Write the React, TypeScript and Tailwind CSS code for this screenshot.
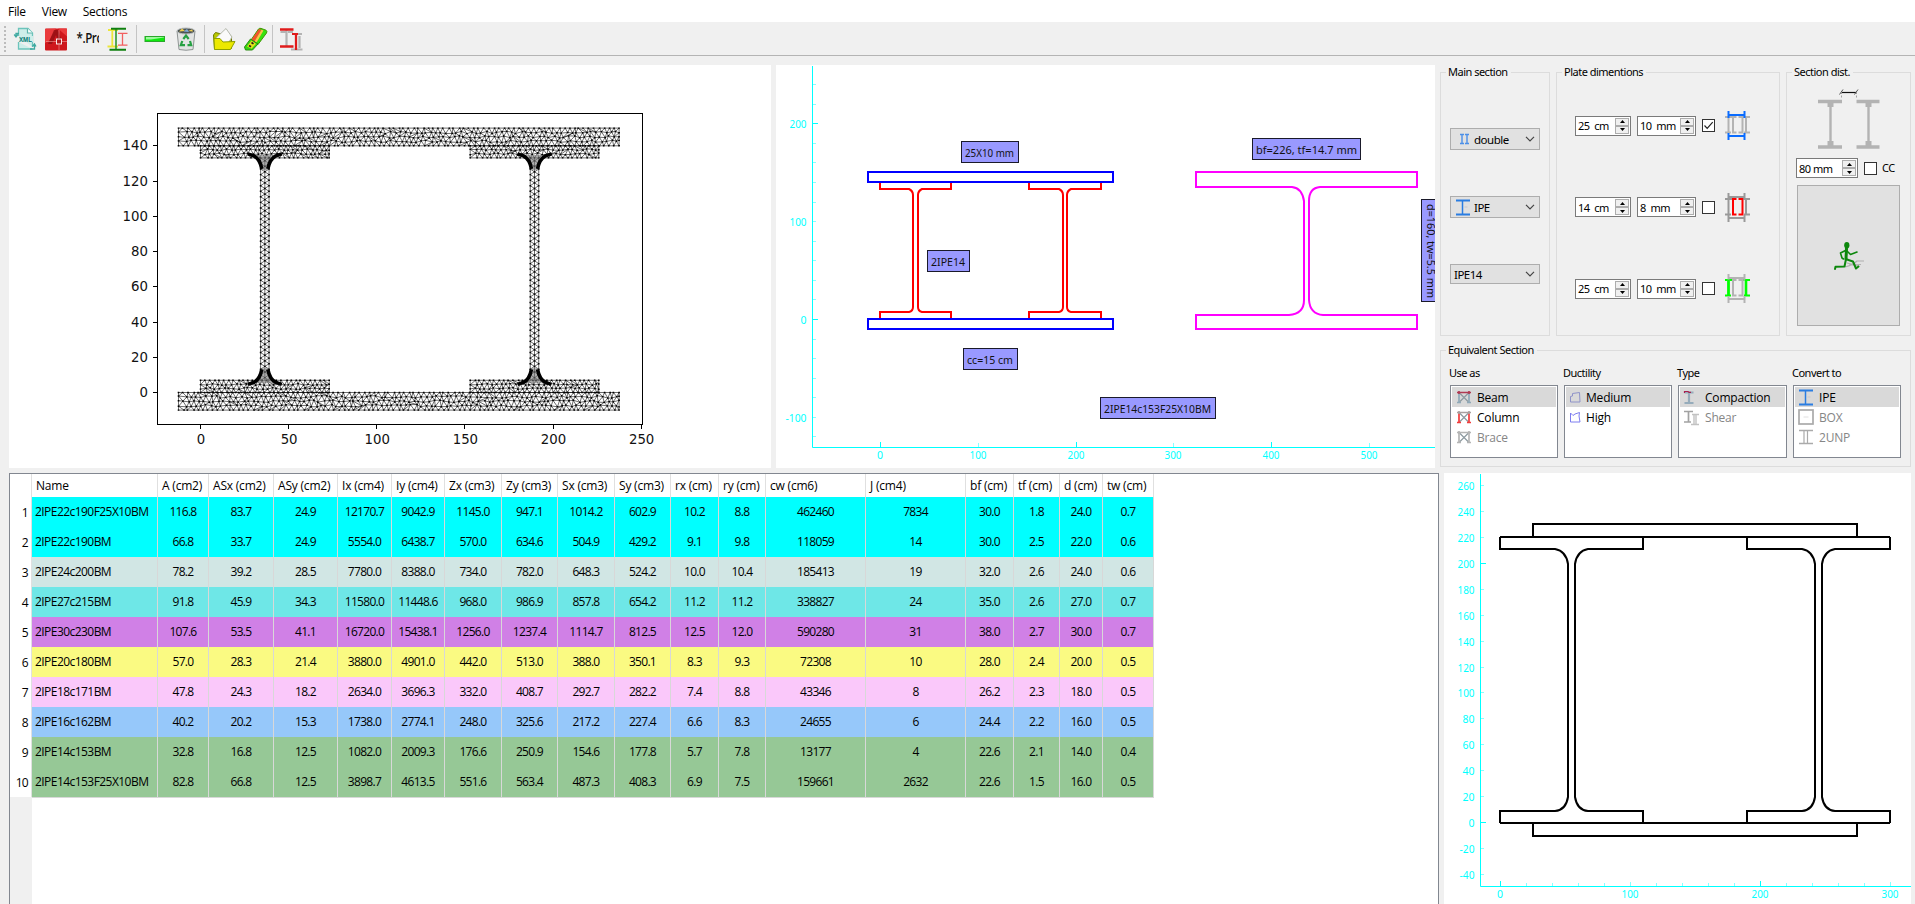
import React from "react";

const UI = "font-['Noto_Sans',sans-serif] tracking-[-0.5px]";
const SEGOE = "font-['Open_Sans','Noto_Sans',sans-serif]";
const TAHOMA = "'Noto Sans',sans-serif";

/* ---------- toolbar icons ---------- */

const XmlIcon = () => (
  <svg width="24" height="24" viewBox="0 0 24 24" className="shrink-0">
    <path d="M5.500 9V1.500H15l4.500 4.500V20M19.500 22H5.500V15" fill="#cfeeea" stroke="#6cc4bb" strokeWidth="1.300" />
    <path d="M6 9H20V15H6z" fill="#cfeeea" />
    <path d="M14.500 1.500V6H19.500" fill="#fff" stroke="#5fb5ae" strokeWidth="1.200" />
    <path d="M6 6.500H3V9.500M1.200 7.500 3 10 4.800 7.500M17 22h4.500V18M19.500 19.500 21.500 17l1.500 2.500" fill="none" stroke="#3fa9a1" strokeWidth="1.300" />
    <text x="6" y="14.500" fontFamily="Liberation Sans, sans-serif" fontSize="6.500" fontWeight="700" letterSpacing="0" fill="#087a74" textLength="13" lengthAdjust="spacingAndGlyphs">XML</text>
  </svg>
);
const CadIcon = () => (
  <svg width="24" height="24" viewBox="0 0 24 24" className="shrink-0">
    <rect x="1" y="1.500" width="22" height="22" rx="1" fill="#cf181d" />
    <path d="M1 2 12 1.500 5 14 1 16zM14 1.500h9v8z" fill="#ea3a3c" />
    <path d="M4 17 10 3h4l5 14h-4l-3-9-4 9z" fill="#8e0f13" opacity=".75" />
    <path d="M2 14.500h10M18 14.500h5M15 3v8M15 18v5" stroke="#f0a09a" strokeWidth=".6" />
    <rect x="12.500" y="12" width="5" height="5" fill="#b51c1f" stroke="#fff" strokeWidth=".9" />
  </svg>
);
const ProIcon = () => (
  <svg width="23" height="24" viewBox="0 0 23 24" className="mr-px shrink-0">
    <text x=".5" y="16" fontFamily="'Open Sans',sans-serif" fontSize="14" fontWeight="600" fill="#111" textLength="26.500" lengthAdjust="spacingAndGlyphs">*.Pro</text>
  </svg>
);
const BeamsIcon = () => (
  <svg width="24" height="24" viewBox="0 0 24 24" className="shrink-0">
    <path d="M1 3h10M.5 19.500H11M5.300 3v16" stroke="#ece63a" strokeWidth="1.800" fill="none" />
    <path d="M11 6.300h9.500M11 18.200h9.500M15.500 6.500v11.500" stroke="#f26060" strokeWidth="1.300" fill="none" />
    <path d="M9 2v21" stroke="#2d962d" strokeWidth="1.600" />
    <path d="M4 1.800h15M2.500 22.800h16.500" stroke="#0f800f" strokeWidth="2" />
  </svg>
);
const MinusIcon = () => (
  <svg width="24" height="24" viewBox="0 0 24 24" className="shrink-0">
    <rect x="2" y="9.500" width="19.500" height="5" fill="#0fe80f" stroke="#2aa82a" />
    <path d="M3 10h18v.6L8 12.500H3z" fill="#9dfa9d" />
  </svg>
);
const RecycleIcon = () => (
  <svg width="24" height="24" viewBox="0 0 24 24" className="shrink-0">
    <path d="M3 4 5 22.500q7 1.500 14 0L21 4z" fill="#e2e4e3" stroke="#8f9494" />
    <ellipse cx="12" cy="4" rx="9" ry="3" fill="#4d5456" stroke="#b9bebe" />
    <path d="M5 4.500 8 1.500l3 2.500zM14 4l4-1.500 1 2z" fill="#f0cf50" />
    <path d="M9.500 4.500 13 2l2 3z" fill="#7fa9d8" />
    <path d="m9.300 12 2.700-3.500L14.700 12M16 14l1.200 4.200H13.500M11 18.200H6.800L8.300 14" fill="none" stroke="#26a043" strokeWidth="2.200" />
  </svg>
);
const FolderIcon = () => (
  <svg width="24" height="24" viewBox="0 0 24 24" className="shrink-0">
    <path d="M2.500 22 1.500 8l2-2.500 4 1h9l3 3v12z" fill="#b9c800" stroke="#6d7c00" />
    <path d="M4 11 14 1.500l6 8.500L15 18z" fill="#fafafa" stroke="#b5b9ad" />
    <path d="M2.500 22.500 2 11.500h6l3 3.500 12-.5-4.500 8z" fill="#ece900" stroke="#8fa000" />
  </svg>
);
const UsbIcon = () => (
  <svg width="26" height="24" viewBox="0 0 26 24" className="shrink-0">
    <path d="M8 13 15.500 2q1-1 2.500-.6l5 1.800q1.500 1 .5 2.800L15 17.500z" fill="#35e30e" stroke="#3f9600" />
    <path d="M8.500 12.500 16 2l2.500.8L11.500 14.500z" fill="#f4512a" />
    <path d="M11.500 14.500 18.500 2.800 20.500 3.500 13.500 15.500z" fill="#ffc04a" />
    <path d="M1.500 20 7.500 12l7.500 5-5.500 6H2.500z" fill="#35d614" stroke="#2b8a10" />
    <path d="M4 19.500 8.500 13.500l4.500 3.200-4.500 5z" fill="#e2e31c" />
    <path d="m6 18.500 2 1.300M8.500 15.500l2 1.400" fill="none" stroke="#222" strokeWidth="1.700" />
  </svg>
);
const SectionIcon = () => (
  <svg width="24" height="24" viewBox="0 0 24 24" className="shrink-0">
    <path d="M7.500 3v16M1.500 5h5M9 5h5M13 7h10M12 22.500h11.500M17 7v15M20.500 9v12" stroke="#b3b3b3" strokeWidth="2.200" />
    <path d="M1 2.500h13.500M1 19.500h13.500" stroke="#e01b1b" strokeWidth="2.300" />
    <path d="M17 6v17M13 7h6" stroke="#e01b1b" strokeWidth="2.200" />
  </svg>
);

const Sep = ({ cls }: { cls: string }) => <div className={`h-7 w-px shrink-0 bg-[#c4c4c4] ${cls}`} />;

/* ---------- mesh plot ---------- */

let seed = 17;
const rnd = () => {
  seed = (seed * 16807) % 2147483647;
  return seed / 2147483647 - 0.5;
};

/* Staggered triangulation of an axis-aligned rectangle with jittered interior nodes. */
function meshRect(x0: number, y0: number, x1: number, y1: number, step: number, rows: number, jit: number) {
  const cols = Math.round((x1 - x0) / step);
  const w = (x1 - x0) / cols;
  const pts: number[][][] = [];
  for (let r = 0; r <= rows; r++) {
    const row: number[][] = [];
    for (let c = 0; c <= cols; c++) {
      const edgeX = c === 0 || c === cols;
      const edgeY = r === 0 || r === rows;
      row.push([
        x0 + w * c + (edgeX ? 0 : (r % 2 ? w / 2 : 0) + rnd() * jit),
        y0 + ((y1 - y0) * r) / rows + (edgeY ? 0 : rnd() * jit),
      ]);
    }
    pts.push(row);
  }
  let d = "";
  let dots = "";
  const seg = (a: number[], b: number[]) => {
    d += `M${a[0].toFixed(1)} ${a[1].toFixed(1)}L${b[0].toFixed(1)} ${b[1].toFixed(1)}`;
  };
  for (let r = 0; r <= rows; r++)
    for (let c = 0; c <= cols; c++) {
      const p = pts[r][c];
      dots += `M${(p[0] - 0.8).toFixed(1)} ${p[1].toFixed(1)}h1.6`;
      if (c < cols) seg(p, pts[r][c + 1]);
      if (r < rows) seg(p, pts[r + 1][c]);
      if (c < cols && r < rows) {
        const flip = rnd() > 0.4;
        if ((r % 2 === 1) !== flip) seg(p, pts[r + 1][c + 1]);
        else seg(pts[r][c + 1], pts[r + 1][c]);
      }
    }
  return { d, dots };
}

/* Two-column web strip: edge nodes and centre nodes alternate. */
function meshWeb(x0: number, y0: number, x1: number, y1: number, n: number) {
  const h = (y1 - y0) / n;
  const xm = (x0 + x1) / 2;
  let d = `M${x0} ${y0}V${y1}M${x1} ${y0}V${y1}M${xm} ${y0}V${y1}`;
  let dots = "";
  for (let i = 0; i < n; i++) {
    const y = y0 + i * h;
    const m = (y + h / 2).toFixed(1);
    d += `M${x0} ${y.toFixed(1)}L${xm} ${m}L${x1} ${y.toFixed(1)}M${x0} ${(y + h).toFixed(1)}L${xm} ${m}L${x1} ${(y + h).toFixed(1)}`;
    dots += `M${xm - 0.8} ${m}h1.6M${x0 - 0.8} ${y.toFixed(1)}h1.6M${x1 - 0.8} ${y.toFixed(1)}h1.6`;
  }
  return { d, dots };
}

const S = 1.7625;
const mx = (v: number) => 191.5 + v * S;
const my = (v: number) => 327.5 - v * S;
const meshParts = [
  meshRect(mx(-12.5), my(150), mx(237.5), my(140), 5, 4, 2.4),
  meshRect(mx(-12.5), my(0), mx(237.5), my(-10), 5, 4, 2.4),
  ...[0, 153].flatMap((o) => [
    meshRect(mx(o), my(140), mx(o + 73), my(133.1), 4.8, 3, 1.8),
    meshRect(mx(o), my(6.9), mx(o + 73), my(0), 4.8, 3, 1.8),
    meshWeb(mx(o + 34.1), my(133.1), mx(o + 38.9), my(6.9), 40),
  ]),
];

function MeshPlot() {
  const fillet = (cx: number, top: boolean) => {
    const y = top ? my(134.8) : my(5.2);
    const k = top ? 1 : -1;
    return (
      <g key={`${cx}${top}`}>
        <path
          d={`M${cx - 15} ${y}Q${cx - 6} ${y + 3 * k} ${cx - 3} ${y + 15 * k}L${cx + 3} ${y + 15 * k}Q${cx + 6} ${y + 3 * k} ${cx + 15} ${y}Z`}
          fill="#777"
          opacity=".6"
        />
        <path
          d={`M${cx - 17} ${y - k}L${cx - 11} ${y + k}Q${cx - 5} ${y + 4 * k} ${cx - 3} ${y + 14 * k}M${cx + 17} ${y - k}L${cx + 11} ${y + k}Q${cx + 5} ${y + 4 * k} ${cx + 3} ${y + 14 * k}`}
          fill="none"
          stroke="#000"
          strokeWidth="3.600"
        />
      </g>
    );
  };
  return (
    <svg width="762" height="403" viewBox="0 0 762 403" className="block tracking-normal">
      <g fill="none" stroke="#000">
        {meshParts.map((m, i) => (
          <g key={i}>
            <path d={m.d} strokeWidth=".58" />
            <path d={m.dots} strokeWidth="1.400" />
          </g>
        ))}
      </g>
      {[36.5, 189.5].map((v) => [fillet(mx(v), true), fillet(mx(v), false)])}
      <rect x="148.500" y="48.500" width="485" height="311" fill="none" stroke="#000" />
      <g stroke="#000">
        {[0, 50, 100, 150, 200, 250].map((v) => (
          <path key={v} d={`M${Math.floor(mx(v)) + 0.5} 360v4`} />
        ))}
        {[0, 20, 40, 60, 80, 100, 120, 140].map((v) => (
          <path key={v} d={`M144 ${Math.floor(my(v)) + 0.5}h4`} />
        ))}
      </g>
      <g fontFamily="DejaVu Sans, sans-serif" fontSize="13.300" fill="#111">
        {[0, 50, 100, 150, 200, 250].map((v) => (
          <text key={v} x={mx(v) + 0.5} y="378.500" textAnchor="middle">{v}</text>
        ))}
        {[0, 20, 40, 60, 80, 100, 120, 140].map((v) => (
          <text key={v} x="139" y={my(v) + 4.5} textAnchor="end">{v}</text>
        ))}
      </g>
    </svg>
  );
}

/* ---------- section plot ---------- */

const range = (a: number, b: number, s: number) => {
  const out: number[] = [];
  for (let v = a; v <= b; v += s) out.push(v);
  return out;
};

type TagProps = { x: number; y: number; w: number; tw: number; children: string };
const Tag = ({ x, y, w, tw, children }: TagProps) => (
  <g>
    <rect x={x} y={y} width={w} height="21" fill="#9999ff" stroke="#1a1a2a" strokeWidth="1" />
    <text x={x + 3.5} y={y + 15} textLength={tw} lengthAdjust="spacingAndGlyphs" fill="#111">{children}</text>
  </g>
);

function PairPlot() {
  const px = (v: number) => Math.floor(104.5 + v * 0.978) + 0.5;
  const py = (v: number) => Math.floor(254.5 - v * 0.979) + 0.5;
  const half = (l: number, r: number, a: number, b: number) =>
    `M${l} 117v7H${a - 4}Q${a} 126 ${a} 130V242Q${a} 246 ${a - 4} 247H${l}v7M${r} 117v7H${b + 4}Q${b} 126 ${b} 130V242Q${b} 246 ${b + 4} 247H${r}v7`;
  return (
    <svg width="659" height="403" viewBox="0 0 659 403" className="block tracking-normal" fontFamily={TAHOMA} fontSize="11.500">
      <path d="M36.500 1V382.500H659" fill="none" stroke="#00ffff" />
      {range(-120, 240, 20).map((v) => (
        <path key={v} d={`M37 ${py(v)}h${v % 200 === 0 ? 5 : 3}`} stroke={v % 200 === 0 ? "#00ffff" : "#8ff"} />
      ))}
      {range(0, 500, 100).map((v) => (
        <path key={v} d={`M${px(v)} 382v${v % 200 === 0 ? -5 : -4}`} stroke={v % 200 === 0 ? "#00ffff" : "#8ff"} />
      ))}
      <g fill="#00ffff">
        {[-100, 0, 100, 200].map((v) => (
          <text key={v} x="30.500" y={py(v) + 4.5} textAnchor="end" textLength={v < 0 ? 21 : v === 0 ? 6 : 17} lengthAdjust="spacingAndGlyphs">{v}</text>
        ))}
        {range(0, 500, 100).map((v) => (
          <text key={v} x={px(v) - 0.5} y="394" textAnchor="middle" textLength={v === 0 ? 6 : 17} lengthAdjust="spacingAndGlyphs">{v}</text>
        ))}
      </g>
      <g fill="none" strokeWidth="2">
        <path d={half(104, 175, 137, 142)} stroke="#f00" />
        <path d={half(253, 325, 287, 291)} stroke="#f00" />
        <path d="M92 107H337V117H92zM92 254H337V264H92z" stroke="#00f" />
        <path
          d="M420 107H641V122H544Q533 123 533 136V235Q534 249 547 250H641V264H420V250H513Q528 249 528 235V136Q526 123 516 122H420z"
          stroke="#f0f"
        />
      </g>
      <Tag x={185.5} y={76.5} w={57} tw={49}>25X10 mm</Tag>
      <Tag x={151.5} y={185.5} w={42} tw={34}>2IPE14</Tag>
      <Tag x={187.5} y={283.5} w={54} tw={46}>cc=15 cm</Tag>
      <Tag x={324.5} y={332.5} w={115} tw={107}>2IPE14c153F25X10BM</Tag>
      <Tag x={476.5} y={73.5} w={108} tw={101}>bf=226, tf=14.7 mm</Tag>
      <rect x="645.500" y="134.500" width="30" height="102" fill="#9999ff" stroke="#1a1a2a" />
      <text transform="translate(650.5 139) rotate(90)" textLength="94" lengthAdjust="spacingAndGlyphs" fill="#111">d=160, tw=5.5 mm</text>
    </svg>
  );
}

function DetailPlot() {
  const px = (v: number) => Math.floor(56.4 + v * 1.3) + 0.5;
  const py = (v: number) => Math.floor(349.6 - v * 1.2962) + 0.5;
  const beam = (l: number, r: number, a: number, b: number) =>
    `M${l} 64V76H${a - 13}Q${a - 2} 78 ${a} 91V324Q${a - 2} 337 ${a - 13} 338H${l}V350M${r} 64V76H${b + 13}Q${b + 2} 78 ${b} 91V324Q${b + 2} 337 ${b + 13} 338H${r}V350`;
  return (
    <svg width="467" height="431" viewBox="0 0 467 431" className="block tracking-normal" fontFamily={TAHOMA} fontSize="11.500">
      <path d="M36.500 1V413.500H467" fill="none" stroke="#00ffff" />
      {range(-40, 260, 20).map((v) => (
        <path key={v} d={`M37 ${py(v)}h${v % 200 === 0 ? 5 : 3}`} stroke={v % 200 === 0 ? "#00ffff" : "#8ff"} />
      ))}
      {range(0, 300, 20).map((v) => (
        <path key={v} d={`M${px(v)} 413v${v % 200 === 0 ? -5 : v % 100 === 0 ? -4 : -3}`} stroke={v % 200 === 0 ? "#00ffff" : "#8ff"} />
      ))}
      <g fill="#00ffff">
        {range(-40, 260, 20).map((v) => (
          <text key={v} x="30.500" y={py(v) + 4.5} textAnchor="end" textLength={v < 0 ? 15 : v === 0 ? 6 : v < 100 ? 12 : 17} lengthAdjust="spacingAndGlyphs">{v}</text>
        ))}
        {range(0, 300, 100).map((v) => (
          <text key={v} x={px(v) - 0.5} y="425" textAnchor="middle" textLength={v === 0 ? 6 : 17} lengthAdjust="spacingAndGlyphs">{v}</text>
        ))}
      </g>
      <g fill="none" stroke="#000" strokeWidth="2">
        <path d="M56 64H446M56 350H446M89 64V51H413V64M89 350V363H413V350" />
        <path d={beam(56, 199, 124, 131)} />
        <path d={beam(303, 446, 371, 378)} />
      </g>
    </svg>
  );
}

/* ---------- form controls ---------- */

type GroupProps = { title: string; cls: string; children?: React.ReactNode };
const Group = ({ title, cls, children }: GroupProps) => (
  <fieldset className={`min-w-0 border border-[#dcdcdc] ${cls}`}>
    <legend className="ml-[5px] h-4 pl-[2px] pr-[3px] text-[11px] leading-4">{title}</legend>
    {children}
  </fieldset>
);

const Chevron = () => (
  <svg width="10" height="6" viewBox="0 0 10 6" className="ml-auto mr-1 shrink-0">
    <path d="M1 .8 5 4.800 9 .8" fill="none" stroke="#444" strokeWidth="1.200" />
  </svg>
);

const Combo = ({ icon, text, cls }: { icon?: React.ReactNode; text: string; cls: string }) => (
  <div className={`flex w-[90px] items-center border border-[#adadad] bg-[#e1e1e1] text-[11.500px] ${cls}`}>
    {icon}
    <span className="pt-px">{text}</span>
    <Chevron />
  </div>
);

const Spin = ({ num, unit, cls }: { num: string; unit: string; cls: string }) => (
  <div className={`flex h-5 items-center border border-[#7a7a7a] bg-white pl-[2px] text-[11px] ${cls}`}>
    <span className="whitespace-pre pt-[2px]">{num}{unit}</span>
    <div className="ml-auto mr-px flex w-[14px] flex-col">
      {[0, 1].map((i) => (
        <div key={i} className="flex h-2 items-center justify-center border border-[#adadad] bg-[#f0f0f0]">
          <svg width="5" height="3" viewBox="0 0 5 3">
            <path d={i ? "M0 0h5L2.500 3z" : "M0 3h5L2.500 0z"} fill="#000" />
          </svg>
        </div>
      ))}
    </div>
  </div>
);

const Check = ({ on }: { on?: boolean }) => (
  <div className="size-[13px] shrink-0 border border-[#333] bg-white">
    {on && (
      <svg width="11" height="11" viewBox="0 0 11 11" className="block">
        <path d="M1.500 5.500 4.200 8.300 9.700 2.200" fill="none" stroke="#222" strokeWidth="1.200" />
      </svg>
    )}
  </div>
);

const PlateIcon = ({ kind }: { kind: "flange" | "web" | "side" }) => {
  const base = kind === "web" ? "#999" : "#b3b3b3";
  const mid = kind === "web" ? "#f00" : base;
  const side = kind === "side" ? "#0f0" : base;
  const fl = kind === "flange" ? "#0a6cff" : base;
  return (
    <svg width="25" height="29" viewBox="0 0 25 29" className="shrink-0">
      <g fill="none" strokeWidth="2">
        <path d="M3.500 6v15M21 6v15M0 6h7M0 21.500h6M18 6h7M19 21.500h6" stroke={side} />
        <path d="M11.500 6H8v15.500h3.500M13.500 6h4v15.500h-4" stroke={mid} strokeWidth="2" />
        <path d="M3.500 4h16M3.500 25h16M3.500 0v7M19.500 0v7M3.500 22v7M19.500 22v7" stroke={fl} />
        {kind === "side" && <path d="M3.500 5.500v16M21 5.500v16" stroke="#0f0" strokeWidth="2.600" />}
      </g>
    </svg>
  );
};

const IpeIcon = ({ cls = "", color = "#2a7de1" }: { cls?: string; color?: string }) => (
  <svg width="16" height="17" viewBox="0 0 16 17" className={`shrink-0 ${cls}`}>
    <path d="M1 1.500h14M1 15.500h14" stroke={color} strokeWidth="2" />
    <path d="M7.500 2v13" stroke={color} strokeWidth="1.500" />
    <path d="M9.500 8h3" stroke="#c9c9cf" />
  </svg>
);

const DistDrawing = () => (
  <svg width="64" height="62" viewBox="0 0 64 62" className="block">
    <g fill="none" stroke="#b3b3b3">
      <path d="M1 13.500h24M1 59h24M39.500 13.500h23M39.500 59h23" strokeWidth="3.400" />
      <path d="M13.500 14v44M51.500 14v44" strokeWidth="2.400" />
      <path d="M13.500 13v6M13.500 53v6M51.500 13v6M51.500 53v6" strokeWidth="6" />
    </g>
    <path d="M24.500 4.500h15" stroke="#111" strokeWidth="1.200" />
    <path d="M22.500 6.500 26 1.500M37.500 6.500 41 1.500" stroke="#555" strokeWidth="1" />
    <path d="M24.500 4v7M39.500 4v7" stroke="#999" strokeWidth=".9" strokeDasharray="2 1.500" />
  </svg>
);

const Runner = () => (
  <svg width="32" height="30" viewBox="0 0 32 30">
    <path d="M12 26q8-2 12-6h7M16 24l12-.5M14 22l12 3" fill="none" stroke="#b0b0b0" strokeWidth="1.200" />
    <ellipse cx="13.800" cy="4.200" rx="2.600" ry="3.200" fill="#0c870c" />
    <g fill="none" stroke="#0c870c" strokeLinecap="round" strokeLinejoin="round">
      <path d="M13.500 7.500 13 18" strokeWidth="3" />
      <path d="M12.500 9.500 7.500 12l1.500 5 1.500 1" strokeWidth="1.600" />
      <path d="M14.500 10.500 17.500 13.500 24 11" strokeWidth="1.600" />
      <path d="M13 18l-1.500 7.500-9 .2L2 28" strokeWidth="2" />
      <path d="M14 18.500 20 20.500 23 27.500l2.500-2" strokeWidth="2" />
    </g>
  </svg>
);

const XSquare = ({ a, b }: { a: string; b: string }) => (
  <svg width="14" height="14" viewBox="0 0 14 14" className="mr-[6px] shrink-0">
    <path d="M2.500 3 11.500 12M11.500 3 2.500 12" stroke="#8d9aa0" strokeWidth="1.200" />
    <path d="M0 12.500h4M10 12.500h4M2 2v10M12 2v10" stroke={b} strokeWidth="1.700" />
    <path d="M0 2.500h14M2 1v3M12 1v3" stroke={a} strokeWidth="1.700" />
  </svg>
);
const Poly = ({ d, c }: { d: string; c: string }) => (
  <svg width="12" height="13" viewBox="0 0 12 13" className="mr-[5px] shrink-0">
    <path d={d} fill="none" stroke={c} strokeWidth="1" />
  </svg>
);
const Compaction = () => (
  <svg width="18" height="17" viewBox="0 0 18 17" className="mr-[4px] shrink-0">
    <path d="M1.500 3.500h9M1.500 14h9M6 4v10" stroke="#96acbb" strokeWidth="2.200" />
    <path d="M1.500 4V2.500h3.500l1 .8h2" fill="none" stroke="#a81f4d" strokeWidth="1.200" />
  </svg>
);
const Shear = () => (
  <svg width="18" height="17" viewBox="0 0 18 17" className="mr-[4px] shrink-0">
    <path d="M1 2.500h9M1 13h7M5.500 3v10" stroke="#a2a2a2" strokeWidth="1.700" />
    <path d="M9 5.500h7M8 15.500h8M11 6v10M13 6v10" stroke="#c2c2c2" strokeWidth="1.400" />
  </svg>
);
const BoxIcon = () => (
  <svg width="16" height="16" viewBox="0 0 16 16" className="shrink-0">
    <rect x="1" y="1" width="14" height="14" fill="none" stroke="#aaa" strokeWidth="1.700" />
    <path d="M5.500 8h5" stroke="#e0e0e0" />
  </svg>
);
const UnpIcon = () => (
  <svg width="16" height="16" viewBox="0 0 16 16" className="shrink-0">
    <path d="M1 1.500h14M1 14.500h14" stroke="#aaa" strokeWidth="1.300" />
    <path d="M6 2v12M9.500 2v12" stroke="#aaa" strokeWidth="1.200" />
  </svg>
);

type Item = { icon: React.ReactNode; text: string; off?: boolean };
const List = ({ label, items, pad }: { label: string; items: Item[]; pad: string }) => (
  <div className="flex flex-col">
    <div className="-ml-px h-[19px] text-[11px] leading-[14px]">{label}</div>
    <div className={`h-[73px] border border-[#828790] bg-white p-px tracking-[-0.2px] ${SEGOE}`}>
      {items.map((it, i) => (
        <div
          key={it.text}
          className={`flex h-5 items-center text-[12px] ${pad} ${i === 0 ? "bg-[#d9d9d9]" : ""} ${it.off ? "text-[#868686]" : "text-black"}`}
        >
          {it.icon}
          <span className="pt-px">{it.text}</span>
        </div>
      ))}
    </div>
  </div>
);

/* ---------- results table ---------- */

const HEAD = ["Name", "A (cm2)", "ASx (cm2)", "ASy (cm2)", "Ix (cm4)", "Iy (cm4)", "Zx (cm3)", "Zy (cm3)", "Sx (cm3)", "Sy (cm3)", "rx (cm)", "ry (cm)", "cw (cm6)", "J (cm4)", "bf (cm)", "tf (cm)", "d (cm)", "tw (cm)"];
const ROWS: [string, string][] = [
  ["bg-[#00ffff]", "2IPE22c190F25X10BM 116.8 83.7 24.9 12170.7 9042.9 1145.0 947.1 1014.2 602.9 10.2 8.8 462460 7834 30.0 1.8 24.0 0.7"],
  ["bg-[#00ffff]", "2IPE22c190BM 66.8 33.7 24.9 5554.0 6438.7 570.0 634.6 504.9 429.2 9.1 9.8 118059 14 30.0 2.5 22.0 0.6"],
  ["bg-[#d1e6e4]", "2IPE24c200BM 78.2 39.2 28.5 7780.0 8388.0 734.0 782.0 648.3 524.2 10.0 10.4 185413 19 32.0 2.6 24.0 0.6"],
  ["bg-[#6ee7e7]", "2IPE27c215BM 91.8 45.9 34.3 11580.0 11448.6 968.0 986.9 857.8 654.2 11.2 11.2 338827 24 35.0 2.6 27.0 0.7"],
  ["bg-[#d080e6]", "2IPE30c230BM 107.6 53.5 41.1 16720.0 15438.1 1256.0 1237.4 1114.7 812.5 12.5 12.0 590280 31 38.0 2.7 30.0 0.7"],
  ["bg-[#fafa82]", "2IPE20c180BM 57.0 28.3 21.4 3880.0 4901.0 442.0 513.0 388.0 350.1 8.3 9.3 72308 10 28.0 2.4 20.0 0.5"],
  ["bg-[#fac8fa]", "2IPE18c171BM 47.8 24.3 18.2 2634.0 3696.3 332.0 408.7 292.7 282.2 7.4 8.8 43346 8 26.2 2.3 18.0 0.5"],
  ["bg-[#96c8fa]", "2IPE16c162BM 40.2 20.2 15.3 1738.0 2774.1 248.0 325.6 217.2 227.4 6.6 8.3 24655 6 24.4 2.2 16.0 0.5"],
  ["bg-[#96c896]", "2IPE14c153BM 32.8 16.8 12.5 1082.0 2009.3 176.6 250.9 154.6 177.8 5.7 7.8 13177 4 22.6 2.1 14.0 0.4"],
  ["bg-[#96c896]", "2IPE14c153F25X10BM 82.8 66.8 12.5 3898.7 4613.5 551.6 563.4 487.3 408.3 6.9 7.5 159661 2632 22.6 1.5 16.0 0.5"],
];
const COLS = "grid grid-cols-[22px_126px_51px_65px_64px_54px_53px_57px_56px_57px_56px_48px_47px_100px_100px_48px_46px_43px_51px]";

function Results() {
  return (
    <div className={`flex h-[431px] w-[1430px] flex-col overflow-hidden border border-b-0 border-[#828790] bg-white text-[12px] tracking-[-0.7px] ${SEGOE}`}>
      <div className={`${COLS} h-[23px] tracking-[-0.2px]`}>
        <div className="border-r border-[#e0e0e0]" />
        {HEAD.map((h) => (
          <div key={h} className="whitespace-nowrap border-r border-[#e0e0e0] pl-1 leading-[23px]">{h}</div>
        ))}
      </div>
      {ROWS.map(([bg, line], i) => (
        <div key={line} className={`${COLS} h-[30px] shrink-0`}>
          <div className="border-r border-[#e0e0e0] pr-[3px] text-right leading-[31px]">{i + 1}</div>
          {line.split(" ").map((v, c) => (
            <div
              key={c}
              className={`whitespace-nowrap border-b border-r border-[#d8d8d8] leading-[29px] ${bg} ${c === 0 ? "pl-[3px] tracking-[-0.55px]" : "text-center"}`}
            >
              {v}
            </div>
          ))}
        </div>
      ))}
      <div className="w-[22px] flex-1 bg-[#f0f0f0]" />
    </div>
  );
}

/* ---------- window ---------- */

export default function App() {
  return (
    <div className={`flex h-[904px] w-[1915px] flex-col overflow-hidden bg-[#f0f0f0] text-black ${UI}`}>
      <div className={`flex h-[22px] shrink-0 gap-4 bg-white pl-2 pt-1 text-[12px] leading-4 tracking-[-0.3px] ${SEGOE}`}>
        <span>File</span>
        <span>View</span>
        <span>Sections</span>
      </div>
      <div className="flex h-[34px] shrink-0 items-center border-b border-[#b4b4b4] pl-1">
        <div className="h-[26px] w-0 border-l-2 border-dotted border-[#bcbcbc]" />
        <div className="flex w-[270px] items-center pl-[7px]">
          <XmlIcon />
          <div className="w-[7px]" />
          <CadIcon />
          <div className="w-2" />
          <ProIcon />
          <div className="w-[7px]" />
          <BeamsIcon />
          <Sep cls="ml-[5px]" />
          <div className="w-[6px]" />
          <MinusIcon />
          <div className="w-[7px]" />
          <RecycleIcon />
          <Sep cls="ml-[6px]" />
          <div className="w-[7px]" />
          <FolderIcon />
          <div className="w-[7px]" />
          <UsbIcon />
        </div>
        <Sep cls="-ml-[4px]" />
        <div className="w-[6px]" />
        <SectionIcon />
      </div>

      <div className="flex h-[417px] shrink-0 pl-[9px]">
        <div className="mt-[9px] h-[403px] w-[762px] bg-white">
          <MeshPlot />
        </div>
        <div className="ml-[5px] mt-[9px] h-[403px] w-[659px] bg-white">
          <PairPlot />
        </div>
        <div className="ml-[5px] flex w-[471px] flex-col pt-2">
          <div className="flex gap-[6px]">
            <Group title="Main section" cls="h-[272px] w-[110px]">
              <div className="flex flex-col pl-[9px] pt-[48px]">
                <Combo
                  cls="h-[22px]"
                  text="double"
                  icon={
                    <svg width="23" height="12" viewBox="0 0 23 12" className="shrink-0">
                      <path d="M9 1.500h4M14 1.500h4M9 10.500h4M14 10.500h4M11 2v8M16 2v8" stroke="#4b8fe8" strokeWidth="1.400" />
                    </svg>
                  }
                />
                <Combo cls="mt-[46px] h-[22px]" text="IPE" icon={<IpeIcon cls="ml-1 mr-[3px]" />} />
                <Combo cls="mt-[46px] h-5 pl-[3px]" text="IPE14" />
              </div>
            </Group>
            <Group title="Plate dimentions" cls="h-[272px] w-[224px]">
              <div className="flex flex-col gap-[52.5px] pl-[18px] pt-[31px]">
                {([["25", "10", "flange"], ["14", "8", "web"], ["25", "10", "side"]] as const).map(([a, b, k]) => (
                  <div key={k} className="flex h-[29px] items-center">
                    <Spin cls="w-14" num={a} unit="  cm" />
                    <Spin cls="ml-[6px] w-[59px]" num={b} unit="  mm" />
                    <div className="w-[6px]" />
                    <Check on={k === "flange"} />
                    <div className="w-[10px]" />
                    <PlateIcon kind={k} />
                  </div>
                ))}
              </div>
            </Group>
            <Group title="Section dist." cls="h-[272px] w-[125px]">
              <div className="pl-[30px] pt-[8px]">
                <DistDrawing />
              </div>
              <div className="flex items-center pl-[9px] pt-[8px]">
                <Spin cls="w-[62px]" num="80" unit=" mm" />
                <div className="w-[6px]" />
                <Check />
                <span className="pl-[5px] text-[11px]">CC</span>
              </div>
              <div className="ml-[10px] mt-[7px] flex h-[141px] w-[103px] items-center justify-center border border-[#adadad] bg-[#e1e1e1]">
                <Runner />
              </div>
            </Group>
          </div>
          <Group title="Equivalent Section" cls="mt-[6px] h-[125px] w-[471px]">
            <div className="grid grid-cols-[108px_108px_109px_108px] gap-[6px] pl-[9px] pt-[8px]">
              <List
                label="Use as"
                pad="pl-[5px]"
                items={[
                  { icon: <XSquare a="#b03a52" b="#8fa9b8" />, text: "Beam" },
                  { icon: <XSquare a="#a9a0a0" b="#f23c3c" />, text: "Column" },
                  { icon: <XSquare a="#b5b5b5" b="#b5b5b5" />, text: "Brace", off: true },
                ]}
              />
              <List
                label="Ductility"
                pad="pl-[3px]"
                items={[
                  { icon: <Poly c="#8f93c9" d="M3.500 2.500 10.500 1.500 11 11H1.500V5.500L3.500 5z" />, text: "Medium" },
                  { icon: <Poly c="#7d7df0" d="M1.500 2 4 4.500 6 3 10.500 1.500 10 5 11 11H1.500z" />, text: "High" },
                ]}
              />
              <List
                label="Type"
                pad="pl-[3px]"
                items={[
                  { icon: <Compaction />, text: "Compaction" },
                  { icon: <Shear />, text: "Shear", off: true },
                ]}
              />
              <List
                label="Convert to"
                pad="gap-[5px] pl-[3px]"
                items={[
                  { icon: <IpeIcon />, text: "IPE" },
                  { icon: <BoxIcon />, text: "BOX", off: true },
                  { icon: <UnpIcon />, text: "2UNP", off: true },
                ]}
              />
            </div>
          </Group>
        </div>
      </div>

      <div className="flex flex-1 pl-[9px]">
        <Results />
        <div className="ml-[5px] h-[431px] w-[467px] bg-white">
          <DetailPlot />
        </div>
      </div>
    </div>
  );
}
